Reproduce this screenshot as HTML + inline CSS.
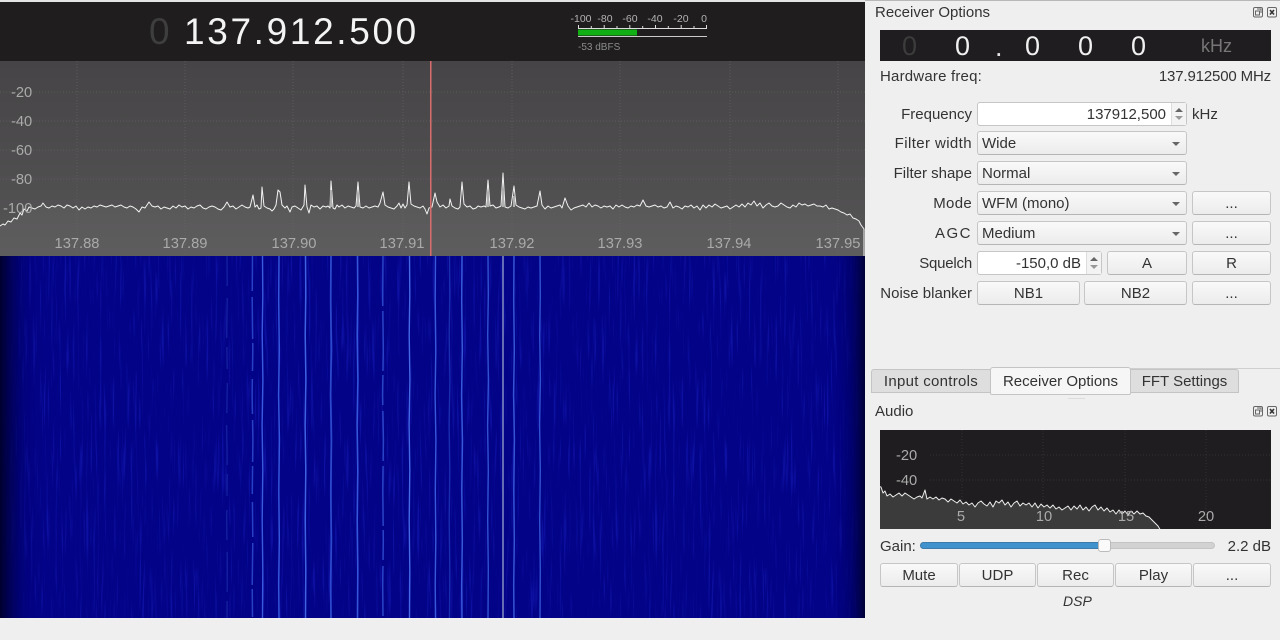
<!DOCTYPE html>
<html lang="en">
<head>
<meta charset="utf-8">
<title>Receiver</title>
<style>
html,body{margin:0;padding:0;background:#efefef}
body{position:relative;width:1280px;height:640px;overflow:hidden;font-family:"Liberation Sans",Arial,sans-serif;font-size:15px;color:#333}
.t{position:absolute;white-space:nowrap;line-height:18px;height:18px}
.r{text-align:right}
.btn,.combo,.spin{position:absolute;box-sizing:border-box;border:1px solid #c6c6c6;border-radius:3px;height:24px;line-height:24px}
.btn{background:linear-gradient(#f9f9f9,#ececec);text-align:center;border-bottom-color:#b5b5b5}
.combo{background:linear-gradient(#f9f9f9,#ececec);padding-left:4px;left:977px;width:210px;border-bottom-color:#b5b5b5}
.combo:after{content:"";position:absolute;right:6px;top:10px;border:4px solid transparent;border-top:4px solid #666;border-bottom:0}
.spin{background:#fff;text-align:right;left:977px}
.sb{position:absolute;right:0;top:0;bottom:0;background:#f3f3f3;border-left:1px solid #ddd}
.sb:before{content:"";position:absolute;left:3px;top:5px;border:4px solid transparent;border-bottom:4px solid #666;border-top:0}
.sb:after{content:"";position:absolute;left:3px;bottom:5px;border:4px solid transparent;border-top:4px solid #999;border-bottom:0}
.tab{position:absolute;box-sizing:border-box;text-align:center;border:1px solid #c4c4c4;line-height:24px}
svg{position:absolute;display:block}
</style>
</head>
<body>

<!-- top display -->
<div style="position:absolute;left:0;top:0;width:865px;height:2px;background:#e4e4e4"></div>
<div style="position:absolute;left:0;top:2px;width:865px;height:59px;background:#1f1d1e"></div>
<div class="t" style="left:149px;top:11px;height:42px;line-height:42px;font-size:37px;color:#3e3e3e">0</div>
<div class="t" style="left:184px;top:11px;height:42px;line-height:42px;font-size:37px;color:#f4f4f4;letter-spacing:2.65px">137.912.500</div>

<!-- s-meter -->
<svg style="left:560px;top:0" width="160" height="60" viewBox="560 0 160 60">
<path d="M578.5 25v4M591.3 26v3M604.2 25v4M617 26v3M629.8 25v4M642.7 26v3M655.5 25v4M668.3 26v3M681.2 25v4M694 26v3M706.5 25v4" stroke="#ddd" fill="none"/>
<path d="M578 28.5h129" stroke="#ddd"/>
<rect x="578" y="29.5" width="59" height="6" fill="#10b014"/>
<path d="M578 36.5h129" stroke="#c9c9c9"/>
<g font-family="'Liberation Sans',sans-serif" font-size="10.5" fill="#b4b4b4" text-anchor="middle">
<text x="581" y="22">-100</text><text x="605" y="22">-80</text><text x="630" y="22">-60</text><text x="655" y="22">-40</text><text x="681" y="22">-20</text><text x="704" y="22">0</text>
<text x="578" y="50" text-anchor="start" fill="#8c8c8c" font-size="10">-53 dBFS</text>
</g>
</svg>

<!-- spectrum -->
<svg style="left:0;top:61px" width="865" height="195" viewBox="0 61 865 195">
<defs><linearGradient id="pg" x1="0" y1="0" x2="0" y2="1"><stop offset="0" stop-color="#464446"/><stop offset="1" stop-color="#565556"/></linearGradient></defs>
<rect x="0" y="61" width="865" height="195" fill="url(#pg)"/>
<path d="M77 61v195M185 61v195M293 61v195M403 61v195M512 61v195M620 61v195M730 61v195M838 61v195M0 92h865M0 121h865M0 150h865M0 179h865" stroke="#5c5b5c" stroke-width="1" stroke-dasharray="1 2" fill="none"/>
<path fill="rgba(255,255,255,.05)" stroke="#f2f2f2" stroke-width="1" stroke-linejoin="round" d="M-3 259V226L0 226 3 224 5 225 8 221 11 222 14 218 17 219 20 213 22 215 24 209 27 211 29 207 32 208 35 209 38 207 41 206 43 203 46 207 49 208 52 206 55 207 58 205 61 206 64 208 67 205 70 206 73 208 76 206 79 210 82 207 85 209 88 207 91 208 94 206 97 207 100 205 103 206 106 207 109 206 112 205 115 207 118 206 121 205 124 207 127 208 130 206 133 207 136 209 139 212 142 207 145 208 149 202 152 206 155 207 158 206 161 209 164 207 167 208 170 209 173 206 176 208 179 205 182 207 185 206 188 209 191 207 194 208 197 206 200 205 203 208 206 209 209 207 212 206 215 207 218 209 221 210 224 207 227 202 230 207 233 206 236 209 239 207 242 205 245 207 248 208 250 207 253 195 255 207 257 205 259 209 261 208 262 187 264 206 267 208 270 209 272 211 274 209 276 205 278 190 280 192 282 205 285 208 287 206 290 212 292 207 295 206 298 208 301 210 304 205 305 185 307 207 309 213 311 205 314 207 317 206 320 209 323 206 326 207 328 206 330 208 331 181 333 208 335 209 337 205 339 207 342 205 345 208 348 206 351 207 354 208 356 206 358 182 360 207 363 208 366 206 369 208 372 207 375 206 378 207 380 203 383 192 385 205 388 207 391 208 394 209 397 206 399 203 401 208 403 204 405 208 407 205 409 182 411 204 414 206 417 207 420 208 423 206 425 209 427 214 429 208 432 207 435 193 437 202 440 207 443 205 446 208 449 206 450 199 452 206 455 208 458 209 460 207 462 182 464 204 467 207 470 206 473 209 476 208 478 206 481 207 484 206 486 207 488 180 490 206 493 205 496 208 499 207 501 206 503 173 505 207 508 208 511 206 514 186 516 205 519 207 522 208 525 209 528 207 531 208 534 207 537 206 540 191 542 205 545 209 548 206 551 208 554 207 557 206 560 205 562 208 565 198 568 206 571 210 574 208 577 207 580 206 583 205 586 207 589 203 592 207 595 205 598 206 601 208 604 206 607 207 610 206 613 209 616 205 619 207 622 205 625 207 628 208 631 206 634 207 637 205 640 206 643 200 646 206 649 207 652 206 655 205 658 207 661 206 664 208 667 207 670 202 673 208 676 206 679 207 682 209 685 206 688 207 691 205 694 208 697 206 700 210 703 205 706 208 709 205 712 207 715 204 718 206 721 208 724 207 727 206 730 209 733 207 736 205 739 207 742 204 745 207 748 203 751 205 754 201 757 206 760 203 763 208 766 205 769 203 772 206 775 207 778 206 781 203 784 205 787 207 790 208 793 205 796 207 799 203 802 205 805 204 808 206 811 205 814 204 817 206 820 206 823 207 826 205 829 209 832 208 835 209 838 210 841 212 844 213 847 215 850 214 853 218 856 219 859 221 861 225 864 229 864 259Z"/>
<path d="M331 207V190M358 207V194M488 207V192M503 207V190M514 207V196" stroke="#b0b0b0" stroke-width="2"/>
<rect x="430" y="61" width="1.5" height="195" fill="#d96d6d"/>
<g font-family="'Liberation Sans',sans-serif" font-size="14.7" fill="#aaa">
<text x="11" y="97">-20</text><text x="11" y="126">-40</text><text x="11" y="155">-60</text><text x="11" y="184">-80</text><text x="3" y="213">-100</text>
<g text-anchor="middle"><text x="77" y="248">137.88</text><text x="185" y="248">137.89</text><text x="294" y="248">137.90</text><text x="402" y="248">137.91</text><text x="512" y="248">137.92</text><text x="620" y="248">137.93</text><text x="729" y="248">137.94</text><text x="838" y="248">137.95</text></g>
</g>
</svg>

<!-- waterfall -->
<svg style="left:0;top:256px" width="865" height="362" viewBox="0 256 865 362">
<defs>
<filter id="n" x="0" y="0" width="100%" height="100%" color-interpolation-filters="sRGB">
<feTurbulence type="fractalNoise" baseFrequency="0.45 0.016" numOctaves="2" seed="7"/>
<feColorMatrix type="matrix" values="0 0 0 0 .14  0 0 0 0 .18  0 0 0 0 .85  5 0 0 0 -2.85"/>
</filter>
<linearGradient id="e" x1="0" y1="0" x2="1" y2="0">
<stop offset="0" stop-color="#00002e"/><stop offset=".012" stop-color="#00004e" stop-opacity=".8"/><stop offset=".03" stop-color="#000070" stop-opacity=".35"/><stop offset=".05" stop-color="#00007c" stop-opacity="0"/>
<stop offset=".96" stop-color="#00007c" stop-opacity="0"/><stop offset=".985" stop-color="#000060" stop-opacity=".7"/><stop offset="1" stop-color="#000036"/>
</linearGradient>
<path id="w" fill="none" d="M0 256L.3 295-.3 335 .4 380-.4 425 .3 470-.3 520 .3 570 0 618"/>
<path id="w2" fill="none" d="M0 256L-.3 300 .3 350-.4 395 .4 440-.2 490 .3 540-.3 585 0 618"/>
</defs>
<rect x="0" y="256" width="865" height="362" fill="#030387"/>
<rect x="0" y="256" width="865" height="362" filter="url(#n)" opacity=".33"/>
<g>
<use href="#w" x="227" stroke="#141f9e" stroke-width="1.4" stroke-dasharray="30 12 40 9 22 14"/>
<use href="#w2" x="252.5" stroke="#2840c6" stroke-width="1.5" stroke-dasharray="35 6 42 4 28 8"/>
<use href="#w" x="262.5" stroke="#3a5ae0" stroke-width="1.4"/>
<use href="#w2" x="279" stroke="#3555da" stroke-width="1.5"/>
<use href="#w" x="305.5" stroke="#3f62e4" stroke-width="1.5"/>
<use href="#w2" x="331" stroke="#2c48cc" stroke-width="1.8"/>
<use href="#w" x="357.5" stroke="#3555da" stroke-width="1.6"/>
<use href="#w2" x="383" stroke="#2a44c8" stroke-width="1.5" stroke-dasharray="50 5 60 4 30 6"/>
<use href="#w" x="409.5" stroke="#4468e6" stroke-width="1.4"/>
<use href="#w2" x="435.5" stroke="#3858dc" stroke-width="1.4"/>
<use href="#w" x="449.5" stroke="#1a2cb0" stroke-width="1.4"/>
<use href="#w2" x="462" stroke="#3758da" stroke-width="1.5"/>
<use href="#w" x="488" stroke="#3252d2" stroke-width="1.4"/>
<path d="M503 256V618" stroke="#7c86c0" stroke-width="1.6"/>
<use href="#w2" x="514" stroke="#3555d6" stroke-width="1.5"/>
<use href="#w" x="540" stroke="#3252d2" stroke-width="1.4"/>
</g>
<rect x="0" y="256" width="865" height="362" fill="url(#e)"/>
</svg>

<!-- right panel -->
<div style="position:absolute;left:865px;top:0;width:415px;height:1px;background:#b8b8b8"></div>
<div class="t" style="left:875px;top:4px">Receiver Options</div>
<svg style="left:1252px;top:6px" width="26" height="13" viewBox="0 0 26 13">
<rect x="1.5" y="1.5" width="9" height="9.5" rx="1.5" fill="none" stroke="#666"/><rect x="3.5" y="5" width="4" height="4" fill="none" stroke="#666"/><path d="M5 3h4v4" fill="none" stroke="#666"/>
<rect x="15.5" y="1.5" width="9" height="9.5" rx="1.5" fill="none" stroke="#666"/><path d="M18 4l4 4.5M22 4l-4 4.5" stroke="#333" stroke-width="1.6"/>
</svg>

<div style="position:absolute;left:880px;top:30px;width:391px;height:31px;background:#1f1d1f"></div>
<div class="t" style="left:902px;top:30px;height:31px;line-height:32px;font-size:27px;color:#3c3c3c">0</div>
<div class="t" style="left:955px;top:30px;height:31px;line-height:32px;font-size:27px;color:#f0f0f0">0</div>
<div class="t" style="left:995px;top:30px;height:31px;line-height:34px;font-size:27px;color:#e4e4e4">.</div>
<div class="t" style="left:1025px;top:30px;height:31px;line-height:32px;font-size:27px;color:#f0f0f0">0</div>
<div class="t" style="left:1078px;top:30px;height:31px;line-height:32px;font-size:27px;color:#f0f0f0">0</div>
<div class="t" style="left:1131px;top:30px;height:31px;line-height:32px;font-size:27px;color:#f0f0f0">0</div>
<div class="t" style="left:1201px;top:30px;height:31px;line-height:32px;font-size:18px;color:#767676">kHz</div>

<div class="t" style="left:880px;top:68px;letter-spacing:.2px">Hardware freq:</div>
<div class="t r" style="right:9px;top:68px;letter-spacing:-.15px">137.912500 MHz</div>

<div class="t r" style="right:308px;top:106px">Frequency</div>
<div class="spin" style="top:102px;width:210px;padding-right:20px">137912,500<div class="sb" style="width:14px"></div></div>
<div class="t" style="left:1192px;top:106px">kHz</div>

<div class="t r" style="right:308px;top:135px;letter-spacing:.4px">Filter width</div>
<div class="combo" style="top:131px">Wide</div>
<div class="t r" style="right:308px;top:165px">Filter shape</div>
<div class="combo" style="top:161px">Normal</div>
<div class="t r" style="right:308px;top:195px;letter-spacing:.3px">Mode</div>
<div class="combo" style="top:191px">WFM (mono)</div>
<div class="btn" style="left:1192px;top:191px;width:79px">...</div>
<div class="t r" style="right:308px;top:225px;letter-spacing:1.5px">AGC</div>
<div class="combo" style="top:221px">Medium</div>
<div class="btn" style="left:1192px;top:221px;width:79px">...</div>
<div class="t r" style="right:308px;top:255px;letter-spacing:-.2px">Squelch</div>
<div class="spin" style="top:251px;width:125px;padding-right:20px">-150,0 dB<div class="sb" style="width:14px"></div></div>
<div class="btn" style="left:1107px;top:251px;width:80px">A</div>
<div class="btn" style="left:1192px;top:251px;width:79px">R</div>
<div class="t r" style="right:308px;top:285px">Noise blanker</div>
<div class="btn" style="left:977px;top:281px;width:103px">NB1</div>
<div class="btn" style="left:1084px;top:281px;width:103px">NB2</div>
<div class="btn" style="left:1192px;top:281px;width:79px">...</div>

<!-- tabs -->
<div style="position:absolute;left:1130px;top:368px;width:150px;height:1px;background:#cfcfcf"></div>
<div class="tab" style="left:871px;top:369px;width:120px;height:24px;background:#dedede;border-radius:3px 0 0 0;letter-spacing:.3px">Input controls</div>
<div class="tab" style="left:1130px;top:369px;width:109px;height:24px;background:#dedede;border-radius:0 3px 0 0">FFT Settings</div>
<div class="tab" style="left:990px;top:367px;width:141px;height:28px;line-height:28px;background:#f6f6f6;border-radius:3px 3px 2px 2px">Receiver Options</div>
<div style="position:absolute;left:1068px;top:398px;width:17px;height:1px;background:#dcdcdc"></div>

<div class="t" style="left:875px;top:403px">Audio</div>
<svg style="left:1252px;top:405px" width="26" height="13" viewBox="0 0 26 13">
<rect x="1.5" y="1.5" width="9" height="9.5" rx="1.5" fill="none" stroke="#666"/><rect x="3.5" y="5" width="4" height="4" fill="none" stroke="#666"/><path d="M5 3h4v4" fill="none" stroke="#666"/>
<rect x="15.5" y="1.5" width="9" height="9.5" rx="1.5" fill="none" stroke="#666"/><path d="M18 4l4 4.5M22 4l-4 4.5" stroke="#333" stroke-width="1.6"/>
</svg>

<!-- audio plot -->
<svg style="left:880px;top:430px" width="391" height="99" viewBox="880 430 391 99">
<rect x="880" y="430" width="391" height="99" fill="#1f1d1f"/>
<path d="M962 430v99M1043 430v99M1125 430v99M1206 430v99M930 455h341M930 480h341" stroke="#333233" stroke-dasharray="1 2" fill="none"/>
<path fill="#3c3b3c" stroke="#eee" stroke-width="1" stroke-linejoin="round" d="M877 533V486L881 487 883 493 885 491 887 496 890 494 893 497 896 495 899 493 902 496 905 493 908 495 911 497 914 499 917 497 920 496 922 498 925 490 927 499 930 497 933 499 936 497 939 500 942 498 945 499 948 502 951 499 954 501 957 503 960 500 963 504 966 502 969 505 972 503 975 507 978 503 981 501 984 504 987 506 990 502 993 507 996 501 999 503 1002 500 1005 505 1008 502 1011 507 1014 503 1017 501 1020 506 1023 503 1026 505 1029 503 1032 507 1035 503 1038 508 1041 504 1044 507 1047 505 1050 508 1053 505 1056 509 1059 507 1062 510 1065 508 1068 506 1071 510 1074 506 1077 509 1080 505 1083 510 1086 507 1089 511 1092 507 1095 505 1098 510 1101 507 1104 511 1107 508 1110 512 1113 510 1116 514 1119 510 1122 514 1125 511 1128 515 1131 511 1134 514 1137 511 1140 514 1143 513 1146 516 1149 517 1152 520 1155 523 1158 526 1161 531 1163 533Z"/>
<g font-family="'Liberation Sans',sans-serif" font-size="14.7" fill="#aaa">
<text x="896" y="460">-20</text><text x="896" y="485">-40</text>
<g text-anchor="middle"><text x="961" y="521">5</text><text x="1044" y="521">10</text><text x="1126" y="521">15</text><text x="1206" y="521">20</text></g>
</g>
</svg>

<!-- gain -->
<div class="t" style="left:880px;top:538px">Gain:</div>
<div style="position:absolute;left:920px;top:542px;width:295px;height:7px;box-sizing:border-box;background:#d2d2d2;border:1px solid #c4c4c4;border-radius:4px"></div>
<div style="position:absolute;left:920px;top:542px;width:184px;height:7px;box-sizing:border-box;background:#3f92cc;border:1px solid #3a7cab;border-radius:4px 0 0 4px"></div>
<div style="position:absolute;left:1098px;top:539px;width:13px;height:13px;box-sizing:border-box;background:#fafafa;border:1px solid #bbb;border-radius:3px"></div>
<div class="t r" style="right:9px;top:538px">2.2 dB</div>

<div class="btn" style="left:880px;top:563px;width:78px">Mute</div>
<div class="btn" style="left:959px;top:563px;width:77px">UDP</div>
<div class="btn" style="left:1037px;top:563px;width:77px">Rec</div>
<div class="btn" style="left:1115px;top:563px;width:77px">Play</div>
<div class="btn" style="left:1193px;top:563px;width:78px">...</div>
<div class="t" style="left:1063px;top:592px;font-style:italic;font-size:14px">DSP</div>

</body>
</html>
